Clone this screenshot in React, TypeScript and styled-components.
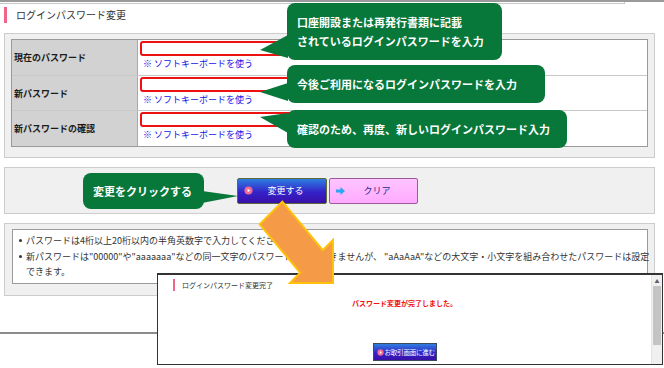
import React from 'react'
import styled, { createGlobalStyle } from 'styled-components'

const fontFamily = `'Noto Sans CJK JP', 'Noto Sans', sans-serif`

const GlobalStyle = createGlobalStyle`
  html, body {
    margin: 0;
    padding: 0;
    background: #fff;
  }
  body {
    font-family: ${fontFamily};
    color: #333;
  }
  * {
    box-sizing: border-box;
  }
`

const Page = styled.div`
  position: relative;
  width: 664px;
  height: 368px;
  overflow: hidden;
  display: flex;
  flex-direction: column;
`

const TopEdge = styled.div`
  height: 5px;
  border-top: 2px solid #9a9a9a;
`

const TopEdgeBox = styled.div`
  width: 625px;
  height: 2px;
  border-bottom: 1px solid #c8c8c8;
  border-right: 1px solid #c8c8c8;
`

const PageTitle = styled.h1`
  margin: 2px 0 0 4px;
  height: 16px;
  padding-left: 9px;
  border-left: 3px solid #f0668a;
  font-size: 10px;
  line-height: 16px;
  font-weight: normal;
  color: #333;
`

const Panel = styled.div`
  margin: ${({ $top = 9 }: { $top?: number }) => $top}px 9px 0 4px;
  border: 1px solid #cccccc;
  background: #f0f0f0;
`

const FormPanel = styled(Panel)`
  padding: 5px 6px 10px 6px;
`

const FormTable = styled.div`
  border: 1px solid #9a9a9a;
`

const FormRow = styled.div`
  display: grid;
  grid-template-columns: 126px 1fr;
  height: ${({ $h = 35 }: { $h?: number }) => $h}px;

  & + & {
    border-top: 1px solid #c8c8c8;
  }
`

const RowLabel = styled.div`
  display: flex;
  align-items: center;
  padding-left: 2px;
  background: #d2d2d2;
  border-right: 1px solid #a8a8a8;
  font-size: 9px;
  font-weight: bold;
  color: #1a1a1a;
`

const RowField = styled.div`
  display: flex;
  flex-direction: column;
  padding: 1px 2px;
  background: #fff;
`

const PasswordInput = styled.div`
  width: 170px;
  height: 15px;
  border: 2px solid #ee1111;
  border-radius: 3px;
  background: #fff;
`

const KeyboardLink = styled.span`
  margin: 2px 0 0 3px;
  font-size: 9px;
  line-height: 12px;
  color: #1414e6;
`

const ButtonPanel = styled(Panel)`
  height: 47px;
  display: flex;
  align-items: center;
  justify-content: center;
  gap: 2px;
  padding-right: 4px;
`

const ActionButton = styled.div`
  position: relative;
  width: ${({ $w }: { $w: number; $kind: 'submit' | 'clear' }) => $w}px;
  height: 26px;
  display: flex;
  align-items: center;
  padding-left: 6px;
  border: 1px solid ${({ $kind }) => ($kind === 'submit' ? '#5b6a38' : '#9a5a9a')};
  border-radius: 2px;
  background: ${({ $kind }) =>
    $kind === 'submit'
      ? 'linear-gradient(#2f7ee0, #3322c8 55%, #3a0fa8)'
      : 'linear-gradient(#ffc4ff, #ffaaff)'};
  color: ${({ $kind }) => ($kind === 'submit' ? '#fff' : '#2a2a8a')};
  font-size: 9px;
`

const ButtonText = styled.span`
  flex: 1;
  text-align: center;
  padding-right: 8px;
`

const NotesPanel = styled(Panel)`
  padding: 5px 6px 11px 7px;
`

const NotesBox = styled.ul`
  margin: 0;
  padding: 3px 6px 3px 6px;
  border: 1px solid #9a9a9a;
  background: #fff;
  list-style: none;
`

const NoteItem = styled.li`
  position: relative;
  padding-left: 7px;
  font-size: 9px;
  line-height: 15.5px;
  color: #333;
  white-space: nowrap;

  &::before {
    content: '';
    position: absolute;
    left: 0;
    top: 6px;
    width: 3px;
    height: 3px;
    border-radius: 50%;
    background: #333;
  }
`

const FooterRule = styled.div`
  margin-top: 36px;
  height: 2px;
  background: #8c8c8c;
`

const Bubble = styled.div`
  position: absolute;
  left: ${({ $x }: { $x: number; $y: number; $w: number; $h: number }) => $x}px;
  top: ${({ $y }) => $y}px;
  width: ${({ $w }) => $w}px;
  height: ${({ $h }) => $h}px;
  display: flex;
  flex-direction: column;
  justify-content: center;
  padding: 0 10px;
  border-radius: 8px;
  background: #08773a;
  color: #fff;
  font-size: 11px;
  font-weight: bold;
  line-height: 19px;
  white-space: nowrap;
`

const Tail = styled.svg`
  position: absolute;
  overflow: visible;
`

const Popup = styled.div`
  position: absolute;
  left: 157px;
  top: 273px;
  width: 506px;
  height: 92px;
  display: flex;
  border: 1px solid #333;
  border-top-width: 2px;
  background: #fff;
`

const PopupBody = styled.div`
  flex: 1;
  display: flex;
  flex-direction: column;
  align-items: center;
  padding-bottom: 3px;
`

const PopupTitle = styled.div`
  align-self: flex-start;
  margin: 4px 0 0 15px;
  height: 12px;
  padding-left: 7px;
  border-left: 2px solid #f0668a;
  font-size: 7px;
  line-height: 12px;
  color: #333;
`

const PopupMessage = styled.div`
  margin-top: 7px;
  font-size: 7px;
  font-weight: bold;
  color: #f01010;
`

const PopupButton = styled.div`
  margin-top: auto;
  width: 64px;
  height: 18px;
  display: flex;
  align-items: center;
  gap: 1px;
  padding-left: 3px;
  border: 1px solid #3a4a5a;
  background: linear-gradient(#2f7ee0, #3322c8 55%, #3a0fa8);
  color: #fff;
  font-size: 6.5px;
  white-space: nowrap;
  letter-spacing: -0.2px;
`

const Scrollbar = styled.div`
  width: 11px;
  display: flex;
  flex-direction: column;
  align-items: center;
  background: #f0f0f0;
  border-left: 1px solid #e4e4e4;
`

const ScrollArrow = styled.span`
  height: 11px;
  font-size: 5px;
  line-height: 11px;
  color: #606060;
`

const ScrollThumb = styled.div`
  width: 8px;
  height: 59px;
  background: #c4c4c4;
`

const Arrow = styled.svg`
  position: absolute;
  left: 0;
  top: 0;
  pointer-events: none;
`

const PlayDot = ({ r = 4 }: { r?: number }) => (
  <svg width={r * 2 + 1} height={r * 2 + 1} viewBox="0 0 10 10">
    <circle cx="5" cy="5" r="4.5" fill="#f06a95" />
    <path d="M4 3 L7 5 L4 7 Z" fill="#fff" />
  </svg>
)

const ClearIcon = () => (
  <svg width="9" height="8" viewBox="0 0 9 8">
    <path d="M0 2.5 H4.5 V0 L9 4 L4.5 8 V5.5 H0 Z" fill="#2aa6ee" />
  </svg>
)

const rows = [
  { label: '現在のパスワード', h: 35 },
  { label: '新パスワード', h: 35 },
  { label: '新パスワードの確認', h: 36 },
]

export default function App() {
  return (
    <>
      <GlobalStyle />
      <Page>
        <TopEdge>
          <TopEdgeBox />
        </TopEdge>
        <PageTitle>ログインパスワード変更</PageTitle>

        <FormPanel $top={10}>
          <FormTable>
            {rows.map((row) => (
              <FormRow key={row.label} $h={row.h}>
                <RowLabel>{row.label}</RowLabel>
                <RowField>
                  <PasswordInput />
                  <KeyboardLink>※ ソフトキーボードを使う</KeyboardLink>
                </RowField>
              </FormRow>
            ))}
          </FormTable>
        </FormPanel>

        <ButtonPanel>
          <ActionButton $w={90} $kind="submit">
            <PlayDot />
            <ButtonText>変更する</ButtonText>
          </ActionButton>
          <ActionButton $w={89} $kind="clear">
            <ClearIcon />
            <ButtonText>クリア</ButtonText>
          </ActionButton>
        </ButtonPanel>

        <NotesPanel>
          <NotesBox>
            <NoteItem>パスワードは4桁以上20桁以内の半角英数字で入力してください。</NoteItem>
            <NoteItem>
              新パスワードは"00000"や"aaaaaaa"などの同一文字のパスワードは設定できませんが、 "aAaAaA"などの大文字・小文字を組み合わせたパスワードは設定
              <br />
              できます。
            </NoteItem>
          </NotesBox>
        </NotesPanel>

        <FooterRule />

        <Bubble $x={287} $y={3} $w={215} $h={57}>
          <Tail width="28" height="25" style={{ left: -27, top: 30 }}>
            <polygon points="0,17 28,2 28,25" fill="#08773a" />
          </Tail>
          <span>口座開設または再発行書類に記載</span>
          <span>されているログインパスワードを入力</span>
        </Bubble>
        <Bubble $x={287} $y={65} $w={258} $h={38}>
          <Tail width="28" height="20" style={{ left: -27, top: 16 }}>
            <polygon points="0,11 28,2 28,20" fill="#08773a" />
          </Tail>
          <span>今後ご利用になるログインパスワードを入力</span>
        </Bubble>
        <Bubble $x={287} $y={110} $w={280} $h={38}>
          <Tail width="28" height="22" style={{ left: -27, top: 3 }}>
            <polygon points="0,4 28,0 28,20" fill="#08773a" />
          </Tail>
          <span>確認のため、再度、新しいログインパスワード入力</span>
        </Bubble>

        <Popup>
          <PopupBody>
            <PopupTitle>ログインパスワード変更完了</PopupTitle>
            <PopupMessage>パスワード変更が完了しました。</PopupMessage>
            <PopupButton>
              <PlayDot r={3} />
              <span>お取引画面に進む</span>
            </PopupButton>
          </PopupBody>
          <Scrollbar>
            <ScrollArrow>▲</ScrollArrow>
            <ScrollThumb />
          </Scrollbar>
        </Popup>

        <Bubble $x={83} $y={173} $w={121} $h={36}>
          <Tail width="36" height="14" style={{ left: 119, top: 18 }}>
            <polygon points="0,0 36,5 0,12" fill="#08773a" />
          </Tail>
          <span>変更をクリックする</span>
        </Bubble>

        <Arrow width="664" height="368" viewBox="0 0 664 368">
          <polygon
            points="282.3,201.7 322.8,250.2 333,240 333,283 290,283 300.2,272.8 259.7,224.3"
            fill="#f59a47"
            stroke="#ffc20a"
            strokeWidth="2"
            strokeLinejoin="miter"
          />
        </Arrow>
      </Page>
    </>
  )
}
